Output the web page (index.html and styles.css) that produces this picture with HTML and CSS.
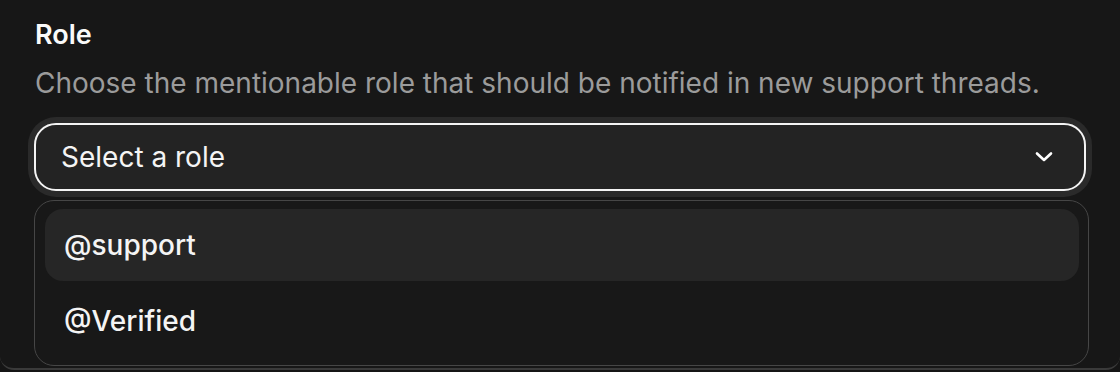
FILE: index.html
```html
<!DOCTYPE html>
<html lang="en">
<head>
    <meta charset="UTF-8">
    <title>Role settings</title>
    <link rel="stylesheet" href="styles.css">
</head>
<body>

    <!-- Support role setting -->
    <div class="panel">
        <div class="field">
            <h2 class="field-title">Role</h2>
            <p class="field-desc">Choose the mentionable role that should be notified in new support threads.</p>

            <button class="select" type="button">
                <span>Select a role</span>
                <svg class="chevron" width="20" height="12" viewBox="0 0 20 12">
                    <path d="M3 2.5 L10 9 L17 2.5" fill="none" stroke="#fff" stroke-width="2.6" stroke-linecap="round" stroke-linejoin="round"/>
                </svg>
            </button>

            <ul class="menu">
                <li class="active">@support</li>
                <li>@Verified</li>
            </ul>
        </div>
    </div>

</body>
</html>
```

FILE: styles.css
```css
* {
    margin: 0;
    padding: 0;
    box-sizing: border-box;
    font-family: Inter, "Noto Sans", sans-serif;
}

body {
    background: #151515;
    height: 372px;
    overflow: hidden;
}

.panel {
    height: 370px;
    background: #171717;
    border-bottom: 2px solid #3a3a3a;
    border-radius: 0 0 14px 14px;
    padding: 20px 31px 0 34px;
}

.field-title {
    color: #fafafa;
    font-size: 27px;
    font-weight: 600;
    line-height: 30px;
    margin-left: 1px;
}

.field-desc {
    color: #9b9b9b;
    font-size: 28px;
    line-height: 36px;
    margin-top: 15px;
    margin-left: 1px;
}

/* Select trigger */
.select {
    display: flex;
    align-items: center;
    justify-content: space-between;
    width: 1052px;
    height: 68px;
    margin-top: 22px;
    padding: 0 30px 0 25px;
    background: #232323;
    border: 2px solid #f4f4f4;
    border-radius: 22px;
    box-shadow: 0 0 0 6px #2a2a2a;
    color: #f4f4f4;
    font-size: 28px;
    text-align: left;
}

.chevron {
    display: block;
}

/* Dropdown list */
.menu {
    list-style: none;
    width: 1055px;
    margin-top: 9px;
    padding: 8px 9px 4px 10px;
    background: #181818;
    border: 1.5px solid #464646;
    border-radius: 20px;
}

.menu li {
    height: 72px;
    display: flex;
    align-items: center;
    padding-left: 19px;
    color: #f4f4f4;
    font-size: 28px;
    font-weight: 500;
    border-radius: 18px;
}

.menu li + li {
    height: 80px;
}

.menu li.active {
    background: #262626;
}
```
